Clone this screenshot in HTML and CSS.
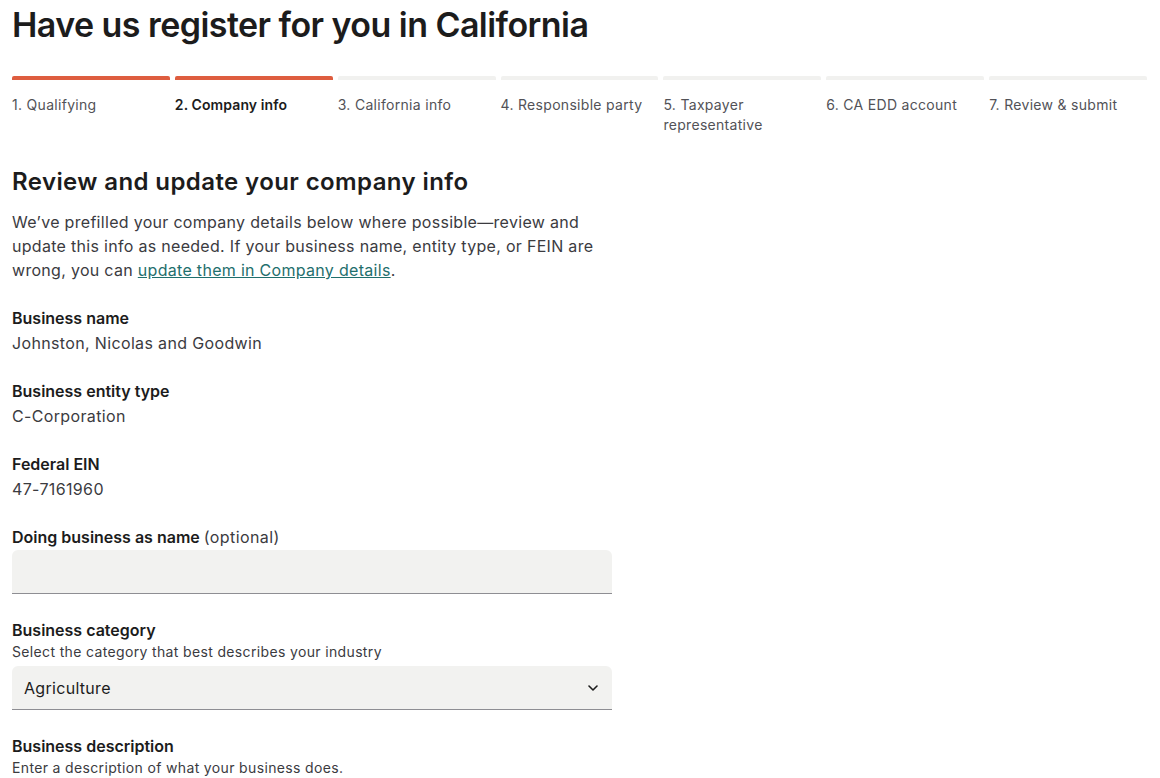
FILE: index.html
```html
<!DOCTYPE html>
<html lang="en">
<head>
    <meta charset="UTF-8">
    <meta name="viewport" content="width=device-width, initial-scale=1.0">
    <title>Have us register for you in California</title>
    <link rel="stylesheet" href="styles.css">
</head>
<body>
    <h1 class="page-title">Have us register for you in California</h1>

    <ol class="steps">
        <li class="step done">1. Qualifying</li>
        <li class="step current">2. Company info</li>
        <li class="step">3. California info</li>
        <li class="step">4. Responsible party</li>
        <li class="step">5. Taxpayer representative</li>
        <li class="step">6. CA EDD account</li>
        <li class="step">7. Review &amp; submit</li>
    </ol>

    <div class="content">
        <h2 class="section-title">Review and update your company info</h2>
        <p class="intro">We’ve prefilled your company details below where possible—review and update this info as needed. If your business name, entity type, or FEIN are wrong, you can <a href="#">update them in Company details</a>.</p>

        <div class="field">
            <div class="label">Business name</div>
            <div class="value">Johnston, Nicolas and Goodwin</div>
        </div>

        <div class="field">
            <div class="label">Business entity type</div>
            <div class="value">C-Corporation</div>
        </div>

        <div class="field">
            <div class="label">Federal EIN</div>
            <div class="value">47-7161960</div>
        </div>

        <div class="field">
            <label class="label" for="dba">Doing business as name <span class="optional">(optional)</span></label>
            <input class="text-input" type="text" id="dba">
        </div>

        <div class="field">
            <label class="label" for="category">Business category</label>
            <div class="hint">Select the category that best describes your industry</div>
            <div class="select-wrap">
                <select class="select-input" id="category">
                    <option>Agriculture</option>
                    <option>Construction</option>
                    <option>Retail</option>
                </select>
                <svg class="chevron" width="10" height="6" viewBox="0 0 10 6"><path d="M1 1l4 4 4-4" fill="none" stroke="#1c1c1c" stroke-width="1.6" stroke-linecap="round" stroke-linejoin="round"/></svg>
            </div>
        </div>

        <div class="field">
            <label class="label" for="description">Business description</label>
            <div class="hint">Enter a description of what your business does.</div>
        </div>
    </div>
</body>
</html>
```

FILE: styles.css
```css
body {
    margin: 0;
    padding: 0 13px 0 12px;
    font-family: Inter, "Noto Sans", sans-serif;
    color: #1c1c1c;
    background-color: white;
}
.page-title {
    margin: 0;
    padding-top: 3px;
    font-size: 34px;
    line-height: 44px;
    font-weight: 600;
    letter-spacing: -0.55px;
}
.steps {
    list-style: none;
    margin: 29px 0 0;
    padding: 0;
    display: grid;
    grid-template-columns: repeat(7, 1fr);
    gap: 5px;
}
.step {
    border-top: 4px solid #f1f1ef;
    border-radius: 2px;
    padding: 15px 6px 0 0;
    font-size: 14px;
    line-height: 20px;
    letter-spacing: 0.3px;
    color: #525257;
}
.step.done,
.step.current {
    border-top-color: #de5d3f;
}
.step.current {
    color: #1c1c1c;
    font-weight: 600;
    letter-spacing: 0.1px;
}
.content {
    width: 600px;
    margin-top: 31px;
}
.section-title {
    margin: 0;
    font-size: 24px;
    line-height: 32px;
    font-weight: 600;
    letter-spacing: 0.4px;
}
.intro {
    margin: 12px 0 0;
    font-size: 16px;
    line-height: 24px;
    letter-spacing: 0.3px;
    color: #3b3b3f;
}
.intro a {
    color: #1f6f6d;
}
.field {
    margin-top: 24px;
}
.label {
    display: block;
    font-size: 16px;
    line-height: 24px;
    font-weight: 600;
}
.optional {
    font-weight: 400;
    letter-spacing: 0.4px;
    color: #3b3b3f;
}
.value {
    margin-top: 1px;
    font-size: 16px;
    line-height: 24px;
    letter-spacing: 0.35px;
    color: #3b3b3f;
}
.hint {
    font-size: 14px;
    line-height: 20px;
    letter-spacing: 0.35px;
    color: #3b3b3f;
}
.text-input,
.select-input {
    display: block;
    box-sizing: border-box;
    width: 100%;
    height: 44px;
    margin-top: 1px;
    padding: 0 12px;
    border: none;
    border-bottom: 1px solid #8e8e93;
    border-radius: 6px 6px 0 0;
    background-color: #f2f2f0;
    font-family: inherit;
    font-size: 16px;
    letter-spacing: 0.3px;
    color: #1c1c1c;
}
.select-wrap {
    position: relative;
    margin-top: 4px;
}
.select-input {
    margin-top: 0;
    appearance: none;
}
.chevron {
    position: absolute;
    right: 14px;
    top: 19px;
}
```
